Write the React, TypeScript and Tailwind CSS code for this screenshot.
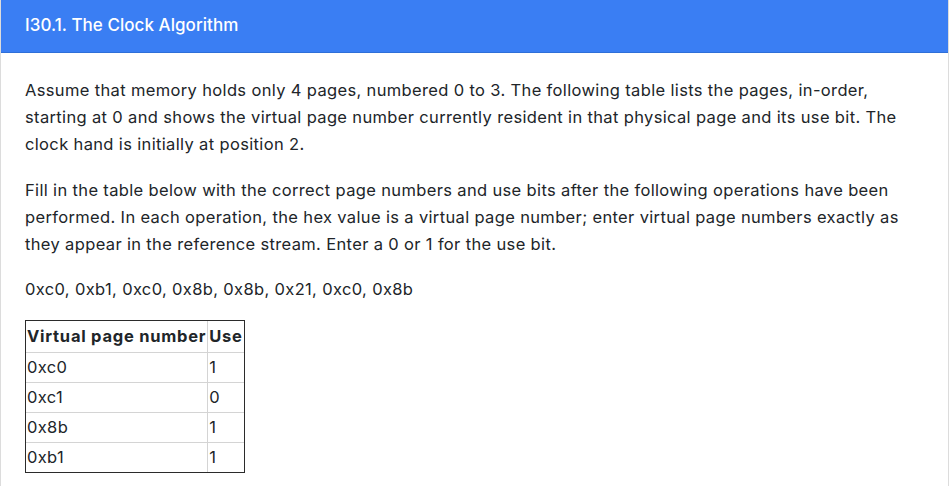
const rows = [
  { page: "0xc0", use: "1" },
  { page: "0xc1", use: "0" },
  { page: "0x8b", use: "1" },
  { page: "0xb1", use: "1" },
];

export default function App() {
  return (
    <div
      className="min-h-[486px] w-[949px] bg-white text-[#212529]"
      style={{ fontFamily: "Inter, 'Noto Sans', sans-serif" }}
    >
      <div className="min-h-[486px] border-x border-[#dcdcdc]">
        <div className="flex h-[53px] items-center border-b border-[#2f6fd8] bg-[#3a7ef3] px-6">
          <h1 className="text-[17px] font-medium tracking-[0.05px] text-white">I30.1. The Clock Algorithm</h1>
        </div>
        <div className="px-6 pt-6 text-[16.5px] leading-[27px] tracking-[0.35px]">
          <p className="mb-[19px]">
            Assume that memory holds only 4 pages, numbered 0 to 3. The following table lists the pages, in-order,
            starting at 0 and shows the virtual page number currently resident in that physical page and its use bit. The
            clock hand is initially at position 2.
          </p>
          <p className="mb-[18px]">
            Fill in the table below with the correct page numbers and use bits after the following operations have been
            performed. In each operation, the hex value is a virtual page number; enter virtual page numbers exactly as
            they appear in the reference stream. Enter a 0 or 1 for the use bit.
          </p>
          <p className="mb-[17px]">0xc0, 0xb1, 0xc0, 0x8b, 0x8b, 0x21, 0xc0, 0x8b</p>
          <div className="inline-block border border-[#2b2b2b]">
            <table className="border-collapse text-left">
              <thead>
                <tr>
                  <th className="border-b border-r border-[#d4d4d4] px-px pt-[3px] pb-[4px] font-bold leading-[24px] tracking-[0.75px]">
                    Virtual page number
                  </th>
                  <th className="border-b border-[#d4d4d4] px-px pt-[3px] pb-[4px] font-bold leading-[24px] tracking-[0.75px]">
                    Use
                  </th>
                </tr>
              </thead>
              <tbody>
                {rows.map((r, i) => (
                  <tr key={i}>
                    <td
                      className={
                        i < rows.length - 1
                          ? "border-b border-r border-[#d4d4d4] px-px py-[3px] leading-[23px]"
                          : "border-r border-[#d4d4d4] px-px py-[3px] leading-[23px]"
                      }
                    >
                      {r.page}
                    </td>
                    <td
                      className={
                        i < rows.length - 1
                          ? "border-b border-[#d4d4d4] px-px py-[3px] leading-[23px]"
                          : "px-px py-[3px] leading-[23px]"
                      }
                    >
                      {r.use}
                    </td>
                  </tr>
                ))}
              </tbody>
            </table>
          </div>
        </div>
      </div>
    </div>
  );
}
